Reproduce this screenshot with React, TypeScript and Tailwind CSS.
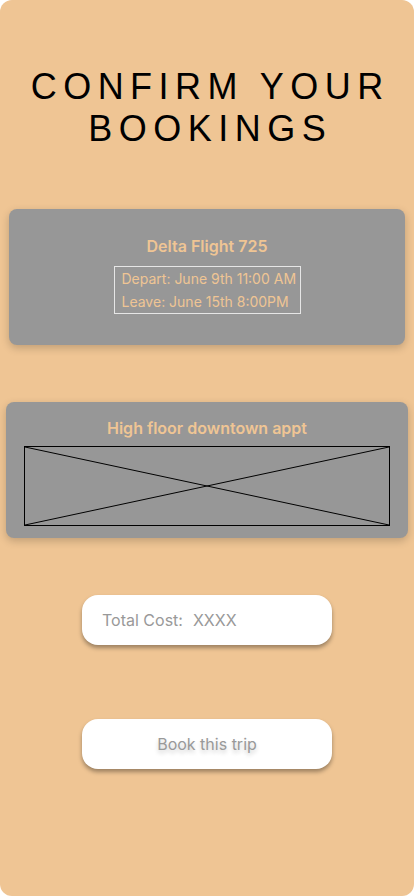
import React from 'react';

const sans = { fontFamily: 'Inter, "Noto Sans", sans-serif' };

export default function App() {
  return (
    <div className="min-h-screen bg-white">
      <div
        className="h-[896px] w-[414px] rounded-[12px] bg-[#efc594] flex flex-col items-center"
        style={sans}
      >
        <h1
          className="mt-[66px] text-center text-[36px] leading-[42px] tracking-[0.18em] text-black pl-[0.18em]"
          style={{ fontFamily: '"Liberation Sans", Arial, sans-serif' }}
        >
          CONFIRM YOUR
          <br />
          BOOKINGS
        </h1>

        {/* flight card */}
        <div className="mt-[59px] w-[396px] h-[136px] rounded-[8px] bg-[#979797] shadow-[0_3px_8px_rgba(0,0,0,0.2)] flex flex-col items-center">
          <div className="mt-[25px] text-[16px] font-semibold text-[#efc594]">Delta Flight 725</div>
          <div className="mt-[8px] w-[187px] h-[48px] border border-[#e6e6e6] px-[7px] text-[14px] leading-[23px] text-[#efc594]">
            <div className="whitespace-nowrap">Depart: June 9th 11:00 AM</div>
            <div className="whitespace-nowrap">Leave: June 15th 8:00PM</div>
          </div>
        </div>

        {/* apartment card */}
        <div className="mt-[57px] w-[402px] h-[136px] rounded-[8px] bg-[#979797] shadow-[0_3px_8px_rgba(0,0,0,0.2)] flex flex-col items-center">
          <div className="mt-[14px] text-[16px] font-semibold text-[#efc594]">High floor downtown appt</div>
          <div className="mt-[6px] w-[366px] h-[80px] border border-black">
            <svg width="100%" height="100%" viewBox="0 0 364 78" preserveAspectRatio="none">
              <line x1="0" y1="0" x2="364" y2="78" stroke="black" strokeWidth="1" />
              <line x1="364" y1="0" x2="0" y2="78" stroke="black" strokeWidth="1" />
            </svg>
          </div>
        </div>

        <div className="mt-[57px] w-[250px] h-[50px] rounded-[16px] bg-white shadow-[0_3px_4px_rgba(0,0,0,0.35)] flex items-center pl-[20px] text-[16px] text-[#999999]">
          Total Cost:<span className="ml-[10px]">XXXX</span>
        </div>

        <button className="mt-[74px] w-[250px] h-[50px] rounded-[16px] bg-white shadow-[0_3px_4px_rgba(0,0,0,0.35)] flex items-center justify-center text-[16px] text-[#999999] [text-shadow:0_3px_4px_rgba(0,0,0,0.2)]">
          Book this trip
        </button>
      </div>
    </div>
  );
}
